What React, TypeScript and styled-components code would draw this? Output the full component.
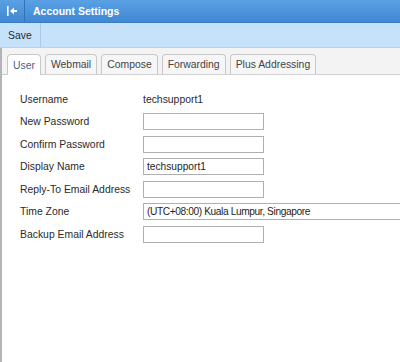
import React from "react";
import styled, { createGlobalStyle } from "styled-components";

const Global = createGlobalStyle`
  html, body { margin: 0; padding: 0; background: #fff; }
  body { font-family: "Liberation Sans", Arial, sans-serif; font-size: 10.4px; color: #2a2a2a; }
`;

const Page = styled.div`
  width: 400px;
  height: 362px;
  display: flex;
  flex-direction: column;
  overflow: hidden;
`;

const Header = styled.div`
  height: 23px;
  display: flex;
  align-items: stretch;
  background: linear-gradient(#5aa0e4, #3f88d3);
  border-bottom: 1px solid #3a7cc2;
  box-sizing: border-box;
`;

const BackCell = styled.div`
  width: 24px;
  display: flex;
  align-items: center;
  justify-content: center;
  border-right: 1px solid #3572b4;
`;

const Title = styled.div`
  display: flex;
  align-items: center;
  padding-left: 8px;
  color: #fff;
  font-weight: bold;
  font-size: 10.5px;
`;

const Toolbar = styled.div`
  height: 25px;
  display: flex;
  align-items: stretch;
  background: #c6e2fa;
  border-bottom: 1px solid #b3d3ef;
  box-sizing: border-box;
`;

const ToolButton = styled.div`
  display: flex;
  align-items: center;
  padding: 0 8px 0 8px;
  border-right: 1px solid #a9cbe9;
  color: #2a2a2a;
  font-size: 10.4px;
`;

const Body = styled.div`
  flex: 1;
  border-left: 2px solid #b4b4b4;
  display: flex;
  flex-direction: column;
`;

const TabBar = styled.div`
  height: 27px;
  background: #f3f3f3;
  display: flex;
  align-items: flex-end;
  padding-left: 5px;
  gap: 4px;
  border-bottom: 1px solid #cfcfcf;
  box-sizing: border-box;
`;

const Tab = styled.div<{ $active?: boolean }>`
  box-sizing: border-box;
  padding: 0 5px;
  display: flex;
  align-items: center;
  border: 1px solid #c8c8c8;
  border-bottom: none;
  border-radius: 4px 4px 0 0;
  background: ${(p) => (p.$active ? "#fff" : "#f6f6f6")};
  color: ${(p) => (p.$active ? "#47628a" : "#444")};
  font-size: 10.4px;
  margin-bottom: ${(p) => (p.$active ? "-1px" : "0")};
  height: ${(p) => (p.$active ? "21px" : "20px")};
`;

const Form = styled.div`
  padding: 13px 0 0 18px;
  display: grid;
  grid-template-columns: 123px 1fr;
  grid-auto-rows: 22.5px;
  align-items: center;
`;

const Label = styled.div`
  color: #2a2a2a;
  font-size: 10.4px;
`;

const Value = styled.div`
  color: #2a2a2a;
  font-size: 10.4px;
`;

const Input = styled.div<{ $wide?: boolean }>`
  width: ${(p) => (p.$wide ? "280px" : "121px")};
  height: 17px;
  box-sizing: border-box;
  border: 1px solid #b0b0b0;
  background: #fff;
  padding: 0 3px;
  display: flex;
  align-items: center;
  font-size: 10.2px;
  letter-spacing: ${(p) => (p.$wide ? "-0.4px" : "0")};
  color: #1e1e1e;
  white-space: nowrap;
`;

export default function App() {
  return (
    <>
      <Global />
      <Page>
        <Header>
          <BackCell>
            <svg width="12" height="12" viewBox="0 0 12 12">
              <rect x="1" y="1" width="1.6" height="10" fill="#fff" />
              <path d="M4 6 L8 2.5 L8 5 L11 5 L11 7 L8 7 L8 9.5 Z" fill="#fff" />
            </svg>
          </BackCell>
          <Title>Account Settings</Title>
        </Header>
        <Toolbar>
          <ToolButton>Save</ToolButton>
        </Toolbar>
        <Body>
          <TabBar>
            <Tab $active>User</Tab>
            <Tab>Webmail</Tab>
            <Tab>Compose</Tab>
            <Tab>Forwarding</Tab>
            <Tab>Plus Addressing</Tab>
          </TabBar>
          <Form>
            <Label>Username</Label>
            <Value>techsupport1</Value>
            <Label>New Password</Label>
            <Input />
            <Label>Confirm Password</Label>
            <Input />
            <Label>Display Name</Label>
            <Input>techsupport1</Input>
            <Label>Reply-To Email Address</Label>
            <Input />
            <Label>Time Zone</Label>
            <Input $wide>(UTC+08:00) Kuala Lumpur, Singapore</Input>
            <Label>Backup Email Address</Label>
            <Input />
          </Form>
        </Body>
      </Page>
    </>
  );
}
